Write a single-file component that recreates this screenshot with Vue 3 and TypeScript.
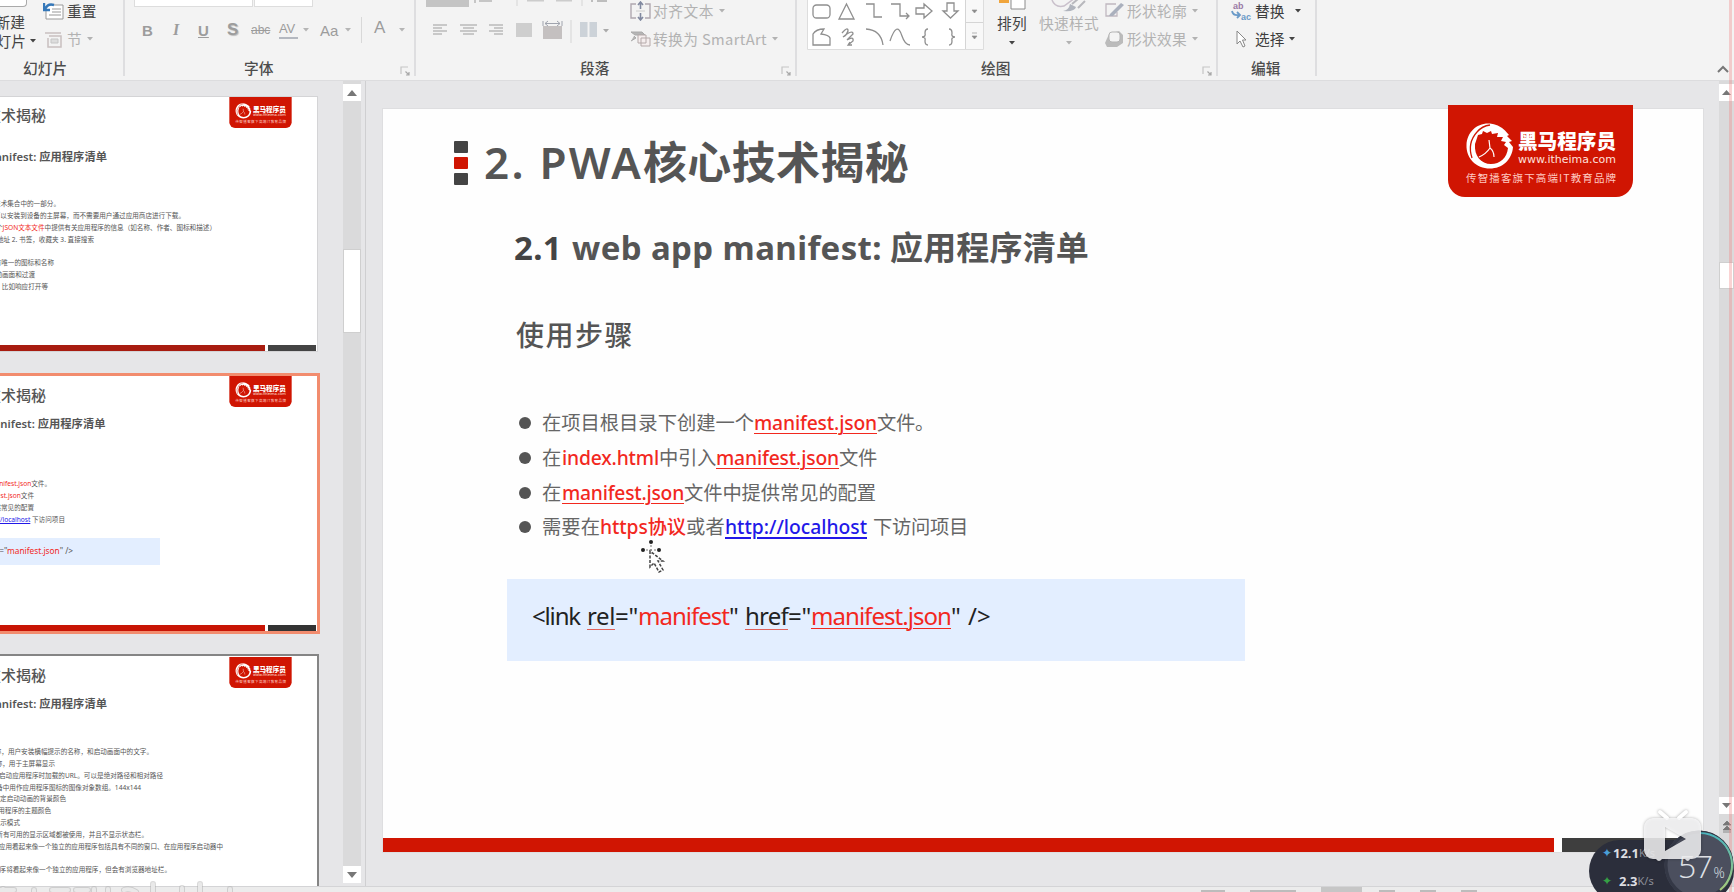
<script setup lang="ts">
import type { Directive } from 'vue'

interface Line {
  end: number
  text: string
  hot?: string
  tail?: string
  link?: string
}

interface Thumb {
  id: string
  subEnd: number
  lines: Line[]
  code?: boolean
}

// Spreads the letters of an element so that the run takes the given width.
const vFit: Directive<HTMLElement, number> = {
  mounted(el, binding) {
    const count = (el.textContent ?? '').length
    const width = el.getBoundingClientRect().width
    if (count > 0) el.style.letterSpacing = `${(binding.value - width) / count}px`
  },
}

const thumbs: Thumb[] = [
  {
    id: 'first',
    subEnd: 107,
    lines: [
      { end: 60, text: '一系列技术集合中的一部分。' },
      { end: 185, text: '可以安装到设备的主屏幕，而不需要用户通过应用商店进行下载。' },
      { end: 216, text: '在一个', hot: 'JSON文本文件', tail: '中提供有关应用程序的信息（如名称、作者、图标和描述）' },
      { end: 94, text: '输入地址 2. 书签，收藏夹 3. 直接搜索' },
      { end: 0, text: '' },
      { end: 54, text: '都拥有唯一的图标和名称' },
      { end: 35, text: '有启动画面和过渡' },
      { end: 48, text: '中，比如响应打开等' },
    ],
  },
  {
    id: 'selected',
    subEnd: 105.5,
    code: true,
    lines: [
      { end: 51, text: '创建一个', hot: 'manifest.json', tail: '文件。' },
      { end: 34, text: '引入', hot: 'manifest.json', tail: '文件' },
      { end: 34, text: '文件中提供常见的配置' },
      { end: 65, text: '或者', link: 'http://localhost', tail: ' 下访问项目' },
    ],
  },
  {
    id: 'third',
    subEnd: 107,
    lines: [
      { end: 153, text: '名称，用户安装横幅提示的名称，和启动画面中的文字。' },
      { end: 55, text: '名称，用于主屏幕显示' },
      { end: 163, text: '启动应用程序时加载的URL。可以是绝对路径和相对路径' },
      { end: 141, text: '设备中用作应用程序图标的图像对象数组。144x144' },
      { end: 66, text: '指定启动动画的背景颜色' },
      { end: 51, text: '应用程序的主题颜色' },
      { end: 20, text: '显示模式' },
      { end: 148, text: '全屏，所有可用的显示区域都被使用，并且不显示状态栏。' },
      { end: 223, text: '让应用看起来像一个独立的应用程序包括具有不同的窗口、在应用程序启动器中' },
      { end: 0, text: '' },
      { end: 171, text: '应用程序将看起来像一个独立的应用程序，但会有浏览器地址栏。' },
    ],
  },
]

const statusMarks = [0, 1, 2]
</script>

<template>
  <div class="app">
    <svg class="defs" width="0" height="0">
      <symbol id="brand" viewBox="0 0 185 92">
        <path d="M0 0H185V75A17 17 0 0 1 168 92H17A17 17 0 0 1 0 75Z" fill="#d01502" />
        <path d="M18.500 40C19 27 29 17.500 42 18.500Q50 19 57 25.500L61 30L59 31L64 36L61 37L65 42C64 55 54 63.500 42 63.500C28 63.500 18 53 18.500 40ZM27 39C26 51 33 59 43 59C52 59 59 53 60 43L56 40L58 37L53 36L55 32L49 32L50 28L44 29L43 26L39 28L35 26L34 29L30 30Z" fill="#fff" fill-rule="evenodd" />
        <path d="M24 53Q19 38 29 27Q34 21 42 20" fill="none" stroke="#d01502" stroke-width="1.300" />
        <path d="M41 35L42 43Q38 49 31 52M42 43Q46 46 46 52" fill="none" stroke="#fff" stroke-width="1.200" />
        <text x="70" y="44" class="brand-name" textLength="98" lengthAdjust="spacingAndGlyphs">黑马程序员</text>
        <text x="70" y="57.500" class="brand-url" textLength="98" lengthAdjust="spacingAndGlyphs">www.itheima.com</text>
        <text x="18" y="77" class="brand-tag" textLength="150">传智播客旗下高端IT教育品牌</text>
      </symbol>
      <symbol id="down" viewBox="0 0 6 4"><path d="M0 0H6L3 3.6Z" fill="currentColor" /></symbol>
      <symbol id="launch" viewBox="0 0 10 10">
        <path d="M1 8V1H8" fill="none" stroke="#c5c5c5" stroke-width="1.200" /><path d="M5.500 5.500L9 9M9 6V9H6" fill="none" stroke="#a8a8a8" stroke-width="1.200" />
      </symbol>
    </svg>

    <header class="ribbon">
      <section class="group g-slides">
        <div class="content">
          <div class="new-slide">
            <span class="new-art"></span>
            <span class="cut">新建</span>
            <span class="cut wide">灯片<svg class="dd"><use href="#down" /></svg></span>
          </div>
          <div class="stack">
            <div class="row r1">
              <svg class="ic" width="21" height="18" viewBox="0 0 21 18">
                <path d="M5 3H20V17H3V9" fill="#fff" stroke="#999" /><path d="M9 7H18M9 10H18M6 13H18" stroke="#bbb" stroke-width="1.5" />
                <path d="M1 1V8H7M2 7Q5 1 11 3" fill="none" stroke="#3578b9" stroke-width="2.4" />
              </svg>
              <span class="t">重置</span>
            </div>
            <div class="row r2 off">
              <svg class="ic" width="21" height="18" viewBox="0 0 21 18">
                <path d="M2 3H18M6 6H18V17H5V8" fill="none" stroke="#c9c0c0" stroke-width="1.5" /><path d="M8 9H15V13H8Z" fill="#ddd" stroke="#c5c5c5" />
              </svg>
              <span class="t">节</span><svg class="dd"><use href="#down" /></svg>
            </div>
          </div>
        </div>
        <footer class="caption"><span>幻灯片</span></footer>
      </section>

      <section class="group g-font">
        <div class="content col">
          <div class="combos"><i class="combo big"></i><i class="combo"></i></div>
          <div class="font-row">
            <b class="f-b">B</b><i class="f-i">I</i><b class="f-u">U</b><b class="f-s">S</b><span class="f-abc">abc</span>
            <span class="f-av">AV</span><svg class="dd"><use href="#down" /></svg>
            <span class="f-aa">Aa</span><svg class="dd"><use href="#down" /></svg>
            <i class="bar"></i><b class="f-a">A</b><svg class="dd"><use href="#down" /></svg>
          </div>
        </div>
        <footer class="caption"><span>字体</span><svg class="launch"><use href="#launch" /></svg></footer>
      </section>

      <section class="group g-para">
        <div class="content">
          <svg class="para-art" width="205" height="50" viewBox="0 0 205 50">
            <path d="M10 0H53V7H10Z" fill="#c4c4c4" /><path d="M59 0V3M63 1H76" stroke="#999" /><path d="M101 0V6M166 0V6" stroke="#d5d5d5" />
            <path d="M111 0H128M140 0H156" stroke="#ccc" stroke-width="3" /><path d="M176 0V2M181 1H191" stroke="#888" />
            <g stroke="#bbb" stroke-width="1.4">
              <path d="M17 25H31M17 28H26M17 31H31M17 34H26" /><path d="M44 25H61M47 28H58M44 31H61M47 34H58" /><path d="M73 25H87M78 28H87M73 31H87M78 34H87" />
            </g>
            <path d="M100 23H116V37H100Z" fill="#cecece" /><path d="M127 26H146V39H127Z" fill="#c4c0c0" />
            <path d="M127 21V26M146 21V26M129 23.500H144M132 21L129 23.500L132 26M141 21L144 23.500L141 26" stroke="#a0a4ae" fill="none" />
            <path d="M155 20V43" stroke="#d5d5d5" /><path d="M164 22H171.500V37H164ZM173.500 22H181V37H173.500Z" fill="#ccd2d8" /><path d="M187 29H193L190 32.500Z" fill="#aaa" />
          </svg>
          <div class="stack off">
            <div class="row r1">
              <svg class="ic" width="21" height="20" viewBox="0 0 21 20">
                <path d="M6 3H1V17H6M15 3H20V17H15" fill="none" stroke="#b0a8b0" stroke-width="1.400" /><path d="M10.500 1V8M10.500 12V19M8 4L10.500 1L13 4M8 16L10.500 19L13 16" fill="none" stroke="#8189a0" stroke-width="1.600" /><path d="M6 10H15" stroke="#ccc" />
              </svg>
              <span class="t" v-fit="61">对齐文本</span><svg class="dd"><use href="#down" /></svg>
            </div>
            <div class="row r2">
              <svg class="ic" width="21" height="18" viewBox="0 0 21 18">
                <path d="M1 2H12L15 5H5ZM1 11L6 8L4 6" fill="#b5b5b5" stroke="#aaa" /><path d="M8 5H16V13H8ZM11 8H20V16H11Z" fill="#f5eeee" stroke="#b5aaaa" />
              </svg>
              <span class="t" v-fit="114">转换为 SmartArt</span><svg class="dd"><use href="#down" /></svg>
            </div>
          </div>
        </div>
        <footer class="caption"><span>段落</span><svg class="launch"><use href="#launch" /></svg></footer>
      </section>

      <section class="group g-draw">
        <div class="content">
          <svg class="gallery" width="178" height="51" viewBox="0 0 178 51">
            <path d="M.5-1V49.500H176.500V-1" fill="#fff" stroke="#ddd" />
            <path d="M159 0H176V22H159ZM159 23H176V49H159Z" fill="#f8f8f8" /><path d="M158.500 0V49M158 22.500H176" stroke="#d5d5d5" />
            <g fill="none" stroke="#8f8f8f" stroke-width="1.300">
              <rect x="6" y="5" width="17" height="13" rx="3.500" /><path d="M39.500 4L47 19H32Z" />
              <path d="M59 4H67V17H75M84 4H93V16H101M99 13L102 16L99 19" />
              <path d="M109 8H117V4L125 11L117 18V14H109ZM140 3H147V11H151L143.500 18L136 11H140Z" />
              <path d="M6 45V34Q9 29 17 29L14 34Q22 35 23 38V45ZM35 33Q41 26 41 31Q40 35 36 37Q46 29 46 34L40 40Q47 36 46 41L41 45M43 42L41 45L45 45" />
              <path d="M59 29Q74 30 76 45M83 41Q90 20 95 36Q98 45 103 45M121 29Q118 29 118 33Q119 37 115 37Q119 37 118 41Q118 45 121 45M142 29Q145 29 145 33Q144 37 148 37Q144 37 145 41Q145 45 142 45" />
            </g>
            <path d="M165 10H170L167.500 13ZM165 36H170L167.500 39ZM165 33H170" fill="#888" stroke="#999" stroke-width=".7" />
          </svg>
          <div class="tool arrange">
            <svg width="30" height="12" viewBox="0 0 30 12"><path d="M2 0H12V3H2Z" fill="#f0a53c" /><path d="M14-2H28V9H14Z" fill="#fff" stroke="#8c8c8c" /></svg>
            <span v-fit="30">排列</span><svg class="dd"><use href="#down" /></svg>
          </div>
          <div class="tool quick off">
            <svg width="36" height="12" viewBox="0 0 36 12"><path d="M1 0Q4 8 13 6L24-2" fill="none" stroke="#c9c0cb" stroke-width="1.500" /><path d="M12 11Q18 10 19 4L25 7Q24 12 12 11Z" fill="#b0b4bd" /><path d="M21 4L27-1M27 8L34 1" stroke="#b8b8bd" stroke-width="2" /></svg>
            <span v-fit="60">快速样式</span><svg class="dd"><use href="#down" /></svg>
          </div>
          <div class="stack off">
            <div class="row r1">
              <svg class="ic" width="20" height="18" viewBox="0 0 20 18"><path d="M12 2H2V14H13V10" fill="none" stroke="#c0b8c0" stroke-width="1.300" /><path d="M6 12L17 1L20 3L9 14L5 14Z" fill="#aab0bd" /></svg>
              <span class="t" v-fit="60">形状轮廓</span><svg class="dd"><use href="#down" /></svg>
            </div>
            <div class="row r2">
              <svg class="ic" width="20" height="18" viewBox="0 0 20 18"><path d="M5 4L15 1L19 5V13L13 17H3L1 13Z" fill="#bbb" /><rect x="5" y="2" width="11" height="10" rx="3" fill="#f4f4f4" stroke="#b5b5b5" /></svg>
              <span class="t" v-fit="60">形状效果</span><svg class="dd"><use href="#down" /></svg>
            </div>
          </div>
        </div>
        <footer class="caption"><span>绘图</span><svg class="launch"><use href="#launch" /></svg></footer>
      </section>

      <section class="group g-edit">
        <div class="content">
          <div class="stack">
            <div class="row r1">
              <svg class="ic" width="21" height="20" viewBox="0 0 21 20"><text x="2" y="8" class="ab">ab</text><text x="10" y="19" class="ac">ac</text><path d="M1 10Q2 15 8 14M6 11L9 14L6 17" fill="none" stroke="#6a9ac8" stroke-width="1.800" /></svg>
              <span class="t">替换</span><svg class="dd far"><use href="#down" /></svg>
            </div>
            <div class="row r2">
              <svg class="ic" width="21" height="20" viewBox="0 0 21 20"><path d="M6 2V15L9 12L12 18L14 17L11.500 11H15Z" fill="#fff" stroke="#888" /></svg>
              <span class="t">选择</span><svg class="dd"><use href="#down" /></svg>
            </div>
          </div>
        </div>
        <footer class="caption"><span>编辑</span></footer>
      </section>
      <svg class="collapse" width="12" height="8" viewBox="0 0 12 8"><path d="M1 7L6 2L11 7" fill="none" stroke="#777" stroke-width="2" /></svg>
    </header>

    <main class="work">
      <aside class="thumbs">
        <article v-for="thumb in thumbs" :key="thumb.id" class="thumb" :class="thumb.id">
          <svg class="mini-brand"><use href="#brand" /></svg>
          <div class="mini-title"><span>2. PWA核心技术揭秘</span></div>
          <div class="mini-sub" :style="{ width: thumb.subEnd + 'px' }"><span>2.1 web app manifest: 应用程序清单</span></div>
          <div class="mini-lines">
            <div v-for="(line, i) in thumb.lines" :key="i" class="mini-line" :style="{ width: line.end + 'px' }">
              <span>{{ line.text }}<em v-if="line.hot">{{ line.hot }}</em><u v-if="line.link">{{ line.link }}</u>{{ line.tail }}</span>
            </div>
          </div>
          <div v-if="thumb.code" class="mini-code"><span>&lt;link rel="<em>manifest</em>" href="<em>manifest.json</em>" /&gt;</span></div>
          <div class="mini-foot"><i></i><i></i></div>
        </article>
      </aside>

      <div class="scroll left">
        <i class="btn"><svg width="10" height="6" viewBox="0 0 10 6"><path d="M0 6H10L5 0Z" fill="#777" /></svg></i>
        <i class="grip"></i>
        <i class="btn last"><svg width="10" height="6" viewBox="0 0 10 6"><path d="M0 0H10L5 6Z" fill="#777" /></svg></i>
      </div>

      <div class="stage">
        <article class="slide">
          <svg class="brand"><use href="#brand" /></svg>
          <div class="title-row">
            <div class="marks"><i></i><i></i><i></i></div>
            <h1><span class="lead" v-fit="159">2. PWA</span><span v-fit="266">核心技术揭秘</span></h1>
          </div>
          <h2><span class="num" v-fit="48">2.1</span><span v-fit="310">web app manifest:</span><span v-fit="199">应用程序清单</span></h2>
          <h3><span v-fit="118">使用步骤</span></h3>
          <ul class="steps">
            <li><span v-fit="212">在项目根目录下创建一个</span><em class="ul" v-fit="123">manifest.json</em><span v-fit="57">文件。</span></li>
            <li><span v-fit="20">在</span><em v-fit="97">index.html</em><span v-fit="57">中引入</span><em class="ul" v-fit="123">manifest.json</em><span v-fit="38">文件</span></li>
            <li><span v-fit="20">在</span><em class="ul" v-fit="122">manifest.json</em><span v-fit="192">文件中提供常见的配置</span></li>
            <li><span v-fit="58">需要在</span><em v-fit="86">https协议</em><span v-fit="39">或者</span><a v-fit="142">http://localhost</a><span class="after" v-fit="95">下访问项目</span></li>
          </ul>
          <div class="code">
            <span v-fit="48">&lt;link</span><span class="word err" v-fit="28">rel</span><span v-fit="23">="</span><em v-fit="91">manifest</em><span v-fit="9">"</span><span class="word err" v-fit="43">href</span><span v-fit="23">="</span><em class="ul" v-fit="140">manifest.json</em><span v-fit="10">"</span><span class="word" v-fit="23">/&gt;</span>
          </div>
          <div class="slide-foot"><i></i><i></i></div>
          <svg class="cursor" width="26" height="38" viewBox="0 0 26 38">
            <path d="M10 12V28L14 24L19 33L23 31L18 22H23Z" fill="#fff" stroke="#444" stroke-width="1.500" stroke-dasharray="3 1.500" />
            <circle cx="11" cy="3" r="2" fill="#222" /><circle cx="3" cy="11" r="2" fill="#222" /><circle cx="19" cy="11" r="2" fill="#222" />
            <path d="M11 6V15M6 11H16" stroke="#777" stroke-dasharray="2 2" />
          </svg>
        </article>
      </div>

      <div class="scroll right">
        <i class="btn"><svg width="9" height="5" viewBox="0 0 9 5"><path d="M0 5H9L4.500 0Z" fill="#777" /></svg></i>
        <i class="grip"></i>
        <i class="btn last"><svg width="9" height="5" viewBox="0 0 9 5"><path d="M0 0H9L4.500 5Z" fill="#777" /></svg></i>
        <svg class="jump" width="10" height="44" viewBox="0 0 10 44"><path d="M1 5L5 1L9 5ZM1 10L5 6L9 10ZM1 12H9M1 33L5 37L9 33ZM1 38L5 42L9 38Z" fill="#777" stroke="#777" stroke-width=".8" /></svg>
      </div>
    </main>

    <footer class="status">
      <svg class="ghost" width="250" height="12" viewBox="0 0 250 12">
        <path d="M-2 10H14M3 9V12M34 10V12M52 10H68M76 10H88M94 9V12M108 9V12M124 10Q130 8 136 12M153 4V12M182 8V12M200 4V12M230 9V12" fill="none" stroke="#aaa" stroke-width="6" stroke-linecap="round" opacity=".45" />
        <path d="M-2 10H14M3 9V12M34 10V12M52 10H68M76 10H88M94 9V12M108 9V12M124 10Q130 8 136 12M153 4V12M182 8V12M200 4V12M230 9V12" fill="none" stroke="#e9e9e9" stroke-width="4" stroke-linecap="round" />
      </svg>
      <div class="views"><i class="note"></i><i class="note wide"></i><b></b><i v-for="m in statusMarks" :key="m"></i></div>
    </footer>

    <i class="pink"></i>
    <div class="meter">
      <div class="speeds">
        <div><span class="up">✦</span><b>12.1</b><small>K/s</small></div>
        <div><span class="dn">✦</span><b class="low">2.3</b><small>K/s</small></div>
      </div>
      <div class="dial">
        <svg width="70" height="70" viewBox="0 0 70 70">
          <defs><linearGradient id="ring" x1="0" y1="0" x2="0" y2="1"><stop offset="0" stop-color="#4bb4bd" /><stop offset="1" stop-color="#a5c97b" /></linearGradient></defs>
          <circle cx="35" cy="35" r="34.500" fill="#4b4f5e" /><circle cx="35" cy="35" r="33" fill="none" stroke="#343846" stroke-width="3" />
          <path d="M36 3A32 32 0 0 1 56 60" fill="none" stroke="url(#ring)" stroke-width="2.200" />
        </svg>
        <span class="pct">57<small>%</small></span>
      </div>
    </div>
    <svg class="player" width="62" height="56" viewBox="0 0 62 56">
      <path d="M18 3L25 9M37 9L44 3" fill="none" stroke="#fff" stroke-width="4" stroke-linecap="round" />
      <path d="M11 9H50A9 9 0 0 1 59 18V41A9 9 0 0 1 50 50H48Q46 54 43 50H20Q17 54 14 50H11A9 9 0 0 1 2 41V18A9 9 0 0 1 11 9ZM23 18V42L44 30Z" fill="#f8f8f9" fill-opacity=".84" fill-rule="evenodd" />
    </svg>
  </div>
</template>

<style>
html,
body {
  margin: 0;
  overflow: hidden;
}
</style>

<style scoped>
.app {
  position: relative;
  display: flex;
  flex-direction: column;
  width: 1734px;
  height: 892px;
  overflow: hidden;
  background: #e6e6e8;
  color: #444;
  font-family: "Noto Sans", "Noto Sans CJK SC", sans-serif;
}
.app *,
.app { box-sizing: border-box; }
.app i { font-style: normal; }
.app svg { flex: none; }
.defs { position: absolute; }
.brand-name { font: 900 20px "Noto Sans CJK SC", sans-serif; fill: #fff; }
.brand-url { font: 11px "DejaVu Sans", sans-serif; fill: #ffe0dc; }
.brand-tag { font: 10.500px "Noto Sans CJK SC", sans-serif; fill: #ffc9c0; }

/* ribbon */
.ribbon {
  display: flex;
  flex: none;
  height: 81px;
  overflow: hidden;
  background: #f3f3f3;
  border-bottom: 1px solid #dcdcde;
  font-family: "Noto Sans CJK SC", sans-serif;
  font-size: 14.700px;
  line-height: 22px;
  white-space: nowrap;
}
.group { position: relative; display: flex; flex-direction: column; flex: none; height: 80px; }
.group::after { content: ""; position: absolute; right: 0; top: 0; width: 2px; height: 76px; background: #dedee0; }
.g-slides { width: 125px; }
.g-font { width: 291px; }
.g-para { width: 381px; }
.g-draw { width: 421px; }
.g-edit { width: 99px; }
.content { display: flex; height: 57px; }
.content.col { flex-direction: column; }
.caption { display: flex; align-items: center; height: 22px; color: #4c4c4c; font-weight: 500; }
.g-slides .caption { padding-left: 23px; }
.g-font .caption { padding-left: 119px; }
.g-para .caption { padding-left: 164px; }
.g-draw .caption { padding-left: 184px; }
.g-edit .caption { padding-left: 33px; }
.launch { width: 10px; height: 10px; margin: 5px 6px 0 auto; }
.dd { width: 6px; height: 4px; margin-left: 5px; }
.off { color: #b2b2b2; }
.row { display: flex; align-items: center; height: 22px; }
.r2 { margin-top: 6px; }
.row .t { margin-left: 3px; }

.new-slide { display: flex; flex-direction: column; align-items: flex-end; width: 36px; }
.new-art { width: 27px; height: 7px; margin-right: 9px; flex: none; border: solid #aaa; border-width: 0 1px 1px 0; border-radius: 0 0 4px 0; background: #fff; }
.cut { height: 20px; margin: 4px 11px 0 0; }
.cut.wide { display: flex; align-items: center; margin: 0; }
.cut .dd { margin-left: 4px; }
.g-slides .stack { margin-left: 7px; }

.combos { display: flex; gap: 1px; height: 7px; padding-left: 9px; }
.combo { width: 59px; height: 6.500px; background: #fff; border: solid #ddd; border-width: 0 1px 1px; }
.combo.big { width: 119px; }
.font-row { display: flex; align-items: center; height: 26px; margin-top: 10px; color: #9c9c9c; font: 15px "Liberation Sans", sans-serif; }
.f-b { width: 12px; margin-left: 17px; }
.app .f-i { width: 10px; margin-left: 19px; font: italic bold 16px "Liberation Serif", serif; }
.f-u { width: 12px; margin-left: 15px; text-decoration: underline; }
.f-s { width: 12px; margin-left: 17px; font-size: 17px; text-shadow: 1px 1px 1px #bbb; }
.f-abc { width: 21px; margin-left: 12px; font-size: 12px; text-decoration: line-through; }
.f-av { width: 19px; height: 18px; margin-left: 7px; font-size: 13px; border-bottom: 2px solid #b4b8c0; letter-spacing: -.300px; }
.f-aa { width: 20px; margin-left: 11px; }
.bar { width: 1px; height: 26px; margin-left: 10px; background: #d8d8d8; }
.f-a { width: 12px; margin-left: 12px; margin-bottom: 4px; font-size: 17px; font-weight: normal; }
.f-a + .dd { margin-left: 13px; }
.font-row .dd { color: #b5b5b5; }
.g-para .stack { margin-left: 9px; }
.g-para .row .t { margin-left: 2px; }
.gallery { margin-left: 10px; }
.tool { display: flex; flex-direction: column; align-items: center; }
.tool > span { height: 20px; }
.tool .dd { margin: 9px 0 0; }
.arrange { width: 38px; margin-left: 8px; }
.quick { width: 60px; margin-left: 8px; }
.g-draw .stack { margin-left: 5px; }
.g-edit .stack { margin-left: 13px; }
.g-edit .t { color: #3c3c3c; }
.dd.far { margin-left: 11px; }
.ab { font: bold 9px "Liberation Sans", sans-serif; fill: #9a7aa5; }
.ac { font: bold 9px "Liberation Sans", sans-serif; fill: #6a9ac8; }
.collapse { margin: 65px 0 0 400px; }

/* working area */
.work { display: flex; flex: none; height: 805px; overflow: hidden; }
.thumbs { width: 320px; overflow: hidden; padding-top: 15px; }
.thumb { position: relative; width: 318px; height: 256px; padding-top: 8px; background: #fff; border: solid #d4d4d6; border-width: 1px 1px 1px 0; overflow: hidden; white-space: nowrap; color: #555; }
.mini-brand { position: absolute; left: 229px; top: 0; width: 63px; height: 31px; }
.mini-title, .mini-sub, .mini-line { display: flex; justify-content: flex-end; }
.mini-title { width: 46px; height: 20px; line-height: 20px; font-size: 15px; font-weight: 500; }
.mini-sub { height: 16px; margin-top: 24px; line-height: 16px; font-size: 11.300px; font-weight: 600; }
.mini-lines { height: 95px; margin-top: 33px; font-size: 6.600px; line-height: 11.850px; }
.mini-line { height: 11.850px; }
.thumb span { flex: none; }
.thumb em { font-style: normal; color: #f2281e; }
.thumb u { color: #2218e8; }
.mini-foot { position: absolute; left: 0; bottom: 0; display: flex; gap: 3px; }
.mini-foot i { width: 265px; height: 6px; background: #a81c10; }
.mini-foot i + i { width: 48px; background: #444; }
.thumb.selected { width: 320px; height: 261px; margin-top: 21px; padding-top: 9px; border: solid #f28c6e; border-width: 3px 3px 3px 0; }
.selected .mini-sub { margin-top: 11px; }
.selected .mini-lines { height: 48px; margin-top: 46px; }
.selected .mini-foot i { background: #c81404; }
.selected .mini-foot i + i { background: #333; }
.mini-code { display: flex; justify-content: flex-end; width: 160px; height: 27px; margin-top: 12px; padding-right: 87px; background: #e3eeff; font-size: 8.300px; line-height: 25px; }
.thumb.third { width: 319px; height: 261px; margin-top: 20px; padding-top: 9px; border: solid #858585; border-width: 2px 2px 0 0; }
.third .mini-brand { top: 1px; }
.third .mini-sub { margin-top: 11px; }
.third .mini-lines { height: 140px; margin-top: 34px; }
.third .mini-foot { display: none; }

.scroll { display: flex; flex-direction: column; position: relative; background: #dadadb; }
.scroll .btn { display: flex; align-items: center; justify-content: center; flex: none; background: #fff; }
.scroll .grip { flex: none; background: #fff; border: 1px solid #cfcfcf; }
.scroll.left { width: 18px; height: 802px; margin-left: 23px; }
.left .btn { height: 17px; margin-top: 3px; }
.left .grip { height: 84px; margin-top: 148px; }
.stage { width: 1354px; margin-left: 4px; padding: 28px 0 0 17px; border-left: 1px solid #cfcfd1; }
.scroll.right { width: 15px; }
.right .btn { height: 17px; margin-top: 3px; }
.right .grip { height: 27px; margin-top: 161px; }
.scroll.left .last { margin-top: auto; }
.scroll.right .last { margin-top: auto; margin-bottom: 6px; }
.jump { margin: 0 0 22px 3px; }

/* slide */
.slide { position: relative; display: flex; flex-direction: column; width: 1320px; height: 743px; background: #fefefe; color: #555; white-space: nowrap; box-shadow: 0 0 0 1px #dedee0; }
.brand { position: absolute; left: 1065px; top: -4px; width: 185px; height: 92px; }
.title-row { display: flex; margin: 29px 0 0 71px; height: 52px; }
.marks { display: flex; flex-direction: column; gap: 4px; padding-top: 3px; }
.marks i { width: 14px; height: 12px; border-radius: 1px; background: #444; }
.marks i:nth-child(2) { background: #d01502; }
h1, h2, h3 { margin: 0; font-weight: 700; }
h1 { margin: -2px 0 0 16px; font-size: 44px; line-height: 52px; }
.lead { font-weight: 600; }
h2 { margin: 35px 0 0 131px; height: 46px; font-size: 33px; line-height: 46px; }
h2 .num { color: #444; margin-right: 10px; }
h2 span + span + span { margin-left: 8px; }
h3 { margin: 44px 0 0 133px; height: 40px; font-size: 28px; line-height: 40px; font-weight: 500; }
.steps { margin: 51px 0 0; padding: 0; list-style: none; font-size: 19.300px; }
.steps li { display: flex; align-items: center; height: 34.700px; padding-left: 136px; line-height: 34px; color: #666; }
.steps li::before { content: ""; width: 12px; height: 12px; margin-right: 11px; border-radius: 50%; background: #555; }
.steps em, .steps a, .code em { font-style: normal; color: #f2281e; }
.steps em, .steps a { font-weight: 500; }
.ul { text-decoration: underline; text-decoration-thickness: 1px; text-underline-offset: 3px; }
.steps a { color: #2218e8; text-decoration: underline; text-decoration-thickness: 1.500px; text-underline-offset: 3px; }
.after { margin-left: 6px; }
.code { display: flex; align-items: center; width: 738px; height: 82px; margin: 34px 0 0 124px; padding: 0 0 7px 25px; background: #e3eeff; color: #222; font-size: 24px; line-height: 34px; }
.code .word { margin-left: 7px; }
.err { text-decoration: underline; text-decoration-color: #e0605a; text-decoration-thickness: 1px; text-underline-offset: 4px; }
.slide-foot { display: flex; gap: 8px; margin-top: auto; }
.slide-foot i { width: 1171px; height: 14px; background: #d01502; }
.slide-foot i + i { width: 141px; background: #3e3e3e; }
.cursor { position: absolute; left: 257px; top: 430px; }

/* status bar and overlays */
.status { position: relative; height: 6px; flex: none; display: flex; background: #ececec; border-top: 1px solid #d4d4d6; }
.ghost { position: absolute; left: 0; bottom: 0; }
.views { display: flex; align-items: flex-end; gap: 25px; margin-left: 1201px; }
.views i { width: 16px; height: 2px; background: #bcbcbc; }
.views .note { width: 24px; }
.views .wide { width: 46px; }
.views b { width: 41px; height: 5px; margin-right: -8px; background: #c6c6c6; }
.pink { position: absolute; top: 0; right: 2px; width: 3px; height: 892px; background: rgba(240, 130, 130, .35); }
.meter { position: absolute; left: 1589px; top: 840px; width: 145px; height: 62px; border-radius: 31px; background: #2b2e3b; }
.speeds { display: flex; flex-direction: column; gap: 10px; padding: 4px 0 0 13px; color: #dedee2; font-size: 13px; line-height: 18px; }
.speeds div { display: flex; align-items: center; }
.speeds span { width: 11px; font-size: 12px; }
.speeds small { color: #8b8e98; font-size: 11px; }
.up { color: #4a9fd8; }
.dn { color: #35a045; }
.low { margin-left: 6px; }
.dial { position: absolute; left: 75px; top: -10px; width: 70px; height: 70px; }
.pct { position: absolute; left: 14px; top: 17px; color: #dfe1e6; font: 300 32px/38px "Open Sans", "Noto Sans", sans-serif; letter-spacing: -1.500px; }
.pct small { font-size: 14px; margin-left: 2px; }
.player { position: absolute; left: 1642px; top: 809px; filter: drop-shadow(0 0 1.500px rgba(0, 0, 0, .35)); }
</style>
